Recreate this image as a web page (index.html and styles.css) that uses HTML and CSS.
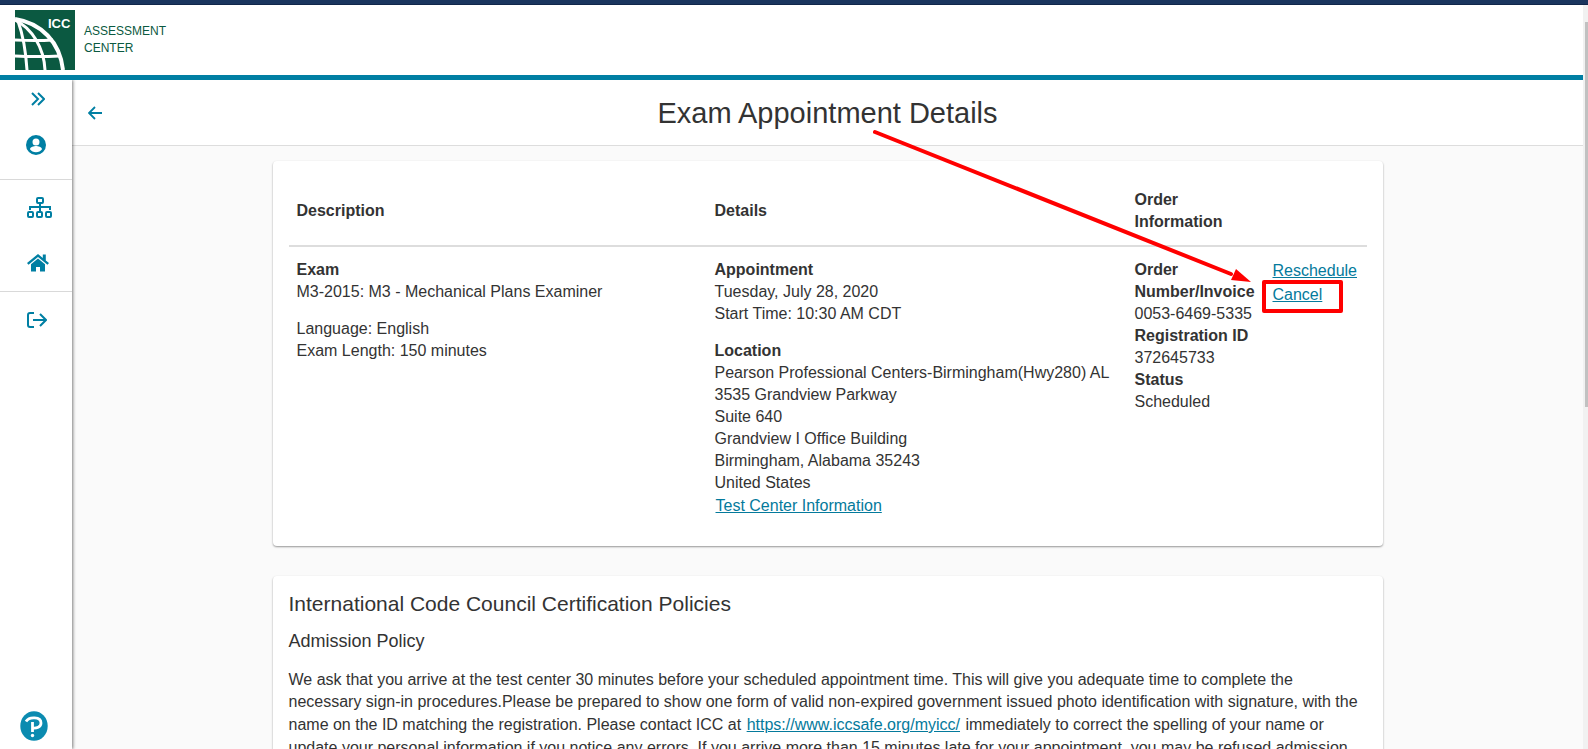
FILE: index.html
```
<!DOCTYPE html>
<html lang="en">
<head>
<meta charset="UTF-8" />
<meta name="viewport" content="width=device-width, initial-scale=1" />
<title>Exam Appointment Details</title>
<link rel="stylesheet" href="styles.css">
</head>
<body>
<div class="topbar"></div>
<div class="viewport">
  <div class="app">
    <header class="site-header">
      <svg class="logo" viewBox="0 0 60 60" aria-hidden="true">
        <rect width="60" height="60" fill="#0b5941" />
        <g fill="none" stroke="#fff">
          <path d="M0 9C26 13 45 32 48 60" stroke-width="4" />
          <path d="M0 10C17 18 29 38 30 60" stroke-width="3" />
          <path d="M3 11C8 25 11 44 12 60" stroke-width="3" />
          <path d="M0 30Q20 31 38 30M0 46Q22 47 45 46" stroke-width="3" />
        </g>
        <text class="logo-text" x="33" y="18">ICC</text>
      </svg>
      <div class="brand">ASSESSMENT<br />CENTER</div>
    </header>
    <div class="layout">
      <nav class="sidebar" aria-label="Main menu">
        <div class="nav-group">
          <button class="nav-btn expand" aria-label="Expand menu">
            <svg width="14" height="14" viewBox="0 0 14 14"><path d="M1 1l6 6-6 6M7 1l6 6-6 6" fill="none" stroke="currentColor" stroke-width="2" /></svg>
          </button>
          <button class="nav-btn profile" aria-label="Profile">
            <svg width="20" height="20" viewBox="0 0 20 20"><path fill="currentColor" fill-rule="evenodd" d="M10 0a10 10 0 1 0 0 20a10 10 0 0 0 0-20zM10 3.500a3.500 3.500 0 1 1 0 7a3.500 3.500 0 0 1 0-7zM10 17.200c-2.500 0-4.700-1.200-6-3c0-2 4-3.100 6-3.100s6 1.100 6 3.100c-1.300 1.800-3.500 3-6 3z" /></svg>
          </button>
        </div>
        <div class="nav-group middle">
          <a class="nav-btn" href="#" aria-label="Programs">
            <svg width="26" height="21" viewBox="0 0 26 21"><g fill="none" stroke="currentColor" stroke-width="2"><rect x="10" y="1" width="6" height="5" rx="1" /><rect x="1" y="15" width="5" height="5" rx="1" /><rect x="10" y="15" width="5" height="5" rx="1" /><rect x="19" y="15" width="5" height="5" rx="1" /><path d="M13 6v8M3 13v-3h20v3" /></g></svg>
          </a>
          <a class="nav-btn" href="#" aria-label="Home">
            <svg width="22" height="18" viewBox="0 0 22 18"><path fill="currentColor" d="M11 0L0 9l1.500 1.700L11 3l9.500 7.700L22 9l-3.200-2.600V.5h-3v3.400zM11 4.600L4 10.300V17.500h5V13h4v4.500h5v-7.200z" /></svg>
          </a>
        </div>
        <div class="nav-group">
          <a class="nav-btn" href="#" aria-label="Sign out">
            <svg width="20" height="16" viewBox="0 0 20 16"><path d="M7 1H3Q1 1 1 3v10q0 2 2 2h4M6 8h12M13 2l6 6-6 6" fill="none" stroke="currentColor" stroke-width="2" /></svg>
          </a>
        </div>
        <svg class="pearson" width="28" height="30" viewBox="0 0 28 30" aria-hidden="true">
          <ellipse cx="14" cy="15" rx="13.700" ry="14.800" fill="#0b8bb0" />
          <path d="M6 10.500C9 5.500 21 5.500 21 12C21 16 16.500 17.500 12.500 17M12.500 11v10" fill="none" stroke="#fff" stroke-width="2.800" />
          <circle cx="12.500" cy="24.500" r="1.700" fill="#fff" />
        </svg>
      </nav>
      <main class="content">
        <div class="page-title">
          <button class="back" aria-label="Back">
            <svg width="14" height="14" viewBox="0 0 14 14"><path d="M14 7H1M7 1L1 7l6 6" fill="none" stroke="currentColor" stroke-width="1.800" /></svg>
          </button>
          <h1>Exam Appointment Details</h1>
        </div>
        <section class="card appointment">
          <table class="details">
            <thead>
              <tr>
                <th class="col-description">Description</th>
                <th class="col-details">Details</th>
                <th class="col-order">Order Information</th>
                <td class="col-actions"></td>
              </tr>
            </thead>
            <tbody>
              <tr>
                <td>
                  <b>Exam</b><br />
                  M3-2015: M3 - Mechanical Plans Examiner
                  <p>Language: English<br />Exam Length: 150 minutes</p>
                </td>
                <td>
                  <b>Appointment</b><br />
                  Tuesday, July 28, 2020<br />
                  Start Time: 10:30 AM CDT
                  <p>
                    <b>Location</b><br />
                    Pearson Professional Centers-Birmingham(Hwy280) AL<br />
                    3535 Grandview Parkway<br />
                    Suite 640<br />
                    Grandview I Office Building<br />
                    Birmingham, Alabama 35243<br />
                    United States<br />
                    <a href="#">Test Center Information</a>
                  </p>
                </td>
                <td>
                  <b>Order Number/Invoice</b><br />
                  0053-6469-5335<br />
                  <b>Registration ID</b><br />
                  372645733<br />
                  <b>Status</b><br />
                  Scheduled
                </td>
                <td>
                  <a href="#">Reschedule</a><br />
                  <a href="#">Cancel</a>
                </td>
              </tr>
            </tbody>
          </table>
          <svg class="callout" width="510" height="190" viewBox="0 0 510 190" aria-hidden="true">
            <path d="M2 6L358 148" stroke="#f00" stroke-width="4" stroke-linecap="round" />
            <path d="M378 156L358 154L363 143z" fill="#f00" />
            <rect x="391" y="156" width="77" height="29" fill="none" stroke="#f00" stroke-width="4" stroke-linejoin="round" />
          </svg>
        </section>
        <section class="card policies">
          <h2>International Code Council Certification Policies</h2>
          <h3>Admission Policy</h3>
          <p>We ask that you arrive at the test center 30 minutes before your scheduled appointment time. This will give you adequate time to complete the necessary sign-in procedures.Please be prepared to show one form of valid non-expired government issued photo identification with signature, with the name on the ID matching the registration. Please contact ICC at <a href="#">https://www.iccsafe.org/myicc/</a> immediately to correct the spelling of your name or update your personal information if you notice any errors. If you arrive more than 15 minutes late for your appointment, you may be refused admission</p>
        </section>
      </main>
    </div>
  </div>
  <div class="scroll-track"><div class="scroll-thumb"></div></div>
</div>
</body>
</html>
```

FILE: styles.css
```
* {
  box-sizing: border-box;
}
html, body {
  margin: 0;
  padding: 0;
}
body {
  display: flex;
  flex-direction: column;
  height: 100vh;
  overflow: hidden;
  font-family: "Liberation Sans", Arial, sans-serif;
  font-size: 16px;
  line-height: 22px;
  color: #333;
  background: #fafafa;
}
a {
  padding: 0 1px;
  color: #047a9c;
  line-height: 24px;
}
button {
  padding: 0;
  border: none;
  background: none;
  cursor: pointer;
}
svg {
  display: block;
}

/* Frame */
.topbar {
  flex: none;
  height: 5px;
  background: #1a355e;
  border-bottom: 1px solid #10264a;
}
.viewport {
  display: flex;
  flex: 1;
  min-height: 0;
}
.app {
  display: flex;
  flex-direction: column;
  flex: 1;
  min-width: 0;
}
.scroll-track {
  width: 5px;
  padding: 17px 0 0 2px;
  background: #f1f1f1;
}
.scroll-thumb {
  height: 53%;
  background: #c1c1c1;
}

/* Header */
.site-header {
  display: flex;
  align-items: center;
  gap: 9px;
  flex: none;
  padding: 5px 15px;
  background: #fff;
  border-bottom: 5px solid #007fa3;
}
.logo {
  width: 60px;
  height: 60px;
}
.logo-text {
  font-family: "Liberation Sans", Arial, sans-serif;
  font-size: 13px;
  font-weight: bold;
  fill: #fff;
}
.brand {
  font-size: 12px;
  line-height: 17px;
  color: #0b5941;
}
.layout {
  display: flex;
  flex: 1;
  min-height: 0;
}

/* Sidebar */
.sidebar {
  display: flex;
  flex-direction: column;
  flex: none;
  width: 72px;
  background: #fff;
  box-shadow: 1px 0 3px rgba(0, 0, 0, 0.5);
  clip-path: inset(0 -6px 0 0);
  z-index: 1;
}
.nav-group {
  display: flex;
  flex-direction: column;
  padding: 14px 0 14px 26px;
}
.nav-group:first-child {
  gap: 29px;
  padding-top: 12px;
  padding-bottom: 24px;
}
.nav-group.middle {
  gap: 36px;
  padding-top: 17px;
  padding-bottom: 19px;
  border-top: 1px solid #d9d9d9;
  border-bottom: 1px solid #d9d9d9;
}
.nav-group:nth-child(3) {
  padding-top: 20px;
}
.nav-btn {
  display: block;
  color: #007fa3;
}
.expand {
  padding-left: 5px;
}
.pearson {
  margin: auto 0 8px 20px;
}

/* Content */
.content {
  flex: 1;
  min-width: 0;
  overflow: hidden;
}
.page-title {
  display: flex;
  align-items: center;
  height: 66px;
  padding: 0 16px;
  background: #fff;
  border-bottom: 1px solid #ddd;
}
.page-title h1 {
  flex: 1;
  margin: 0;
  font-size: 29px;
  font-weight: normal;
  line-height: 36px;
  text-align: center;
}
.back {
  width: 16px;
  margin-right: -16px;
  color: #007fa3;
}
.card {
  max-width: 1110px;
  margin: 15px auto 30px;
  padding: 16px;
  background: #fff;
  border-radius: 4px;
  box-shadow: 0 1px 2px rgba(0, 0, 0, 0.4);
}
.appointment {
  position: relative;
}

/* Appointment table */
.details {
  width: 100%;
  border-collapse: collapse;
}
.details th,
.details td {
  padding: 12px 8px;
  text-align: left;
}
.details thead tr {
  border-bottom: 2px solid #ddd;
}
.details tbody td {
  vertical-align: top;
}
.details p {
  margin: 15px 0 0;
}
.col-description {
  width: 418px;
}
.col-details {
  width: 420px;
}
.col-order {
  width: 137px;
}

/* Arrow and frame pointing at the cancel link */
.callout {
  position: absolute;
  top: -35px;
  right: 0;
  pointer-events: none;
}

/* Policies */
.policies h2 {
  margin: 0 0 14px;
  font-size: 21px;
  font-weight: normal;
  line-height: 24px;
}
.policies h3 {
  margin: 0 0 17px;
  font-size: 18px;
  font-weight: normal;
  line-height: 22px;
}
.policies p {
  margin: 0;
}
```
